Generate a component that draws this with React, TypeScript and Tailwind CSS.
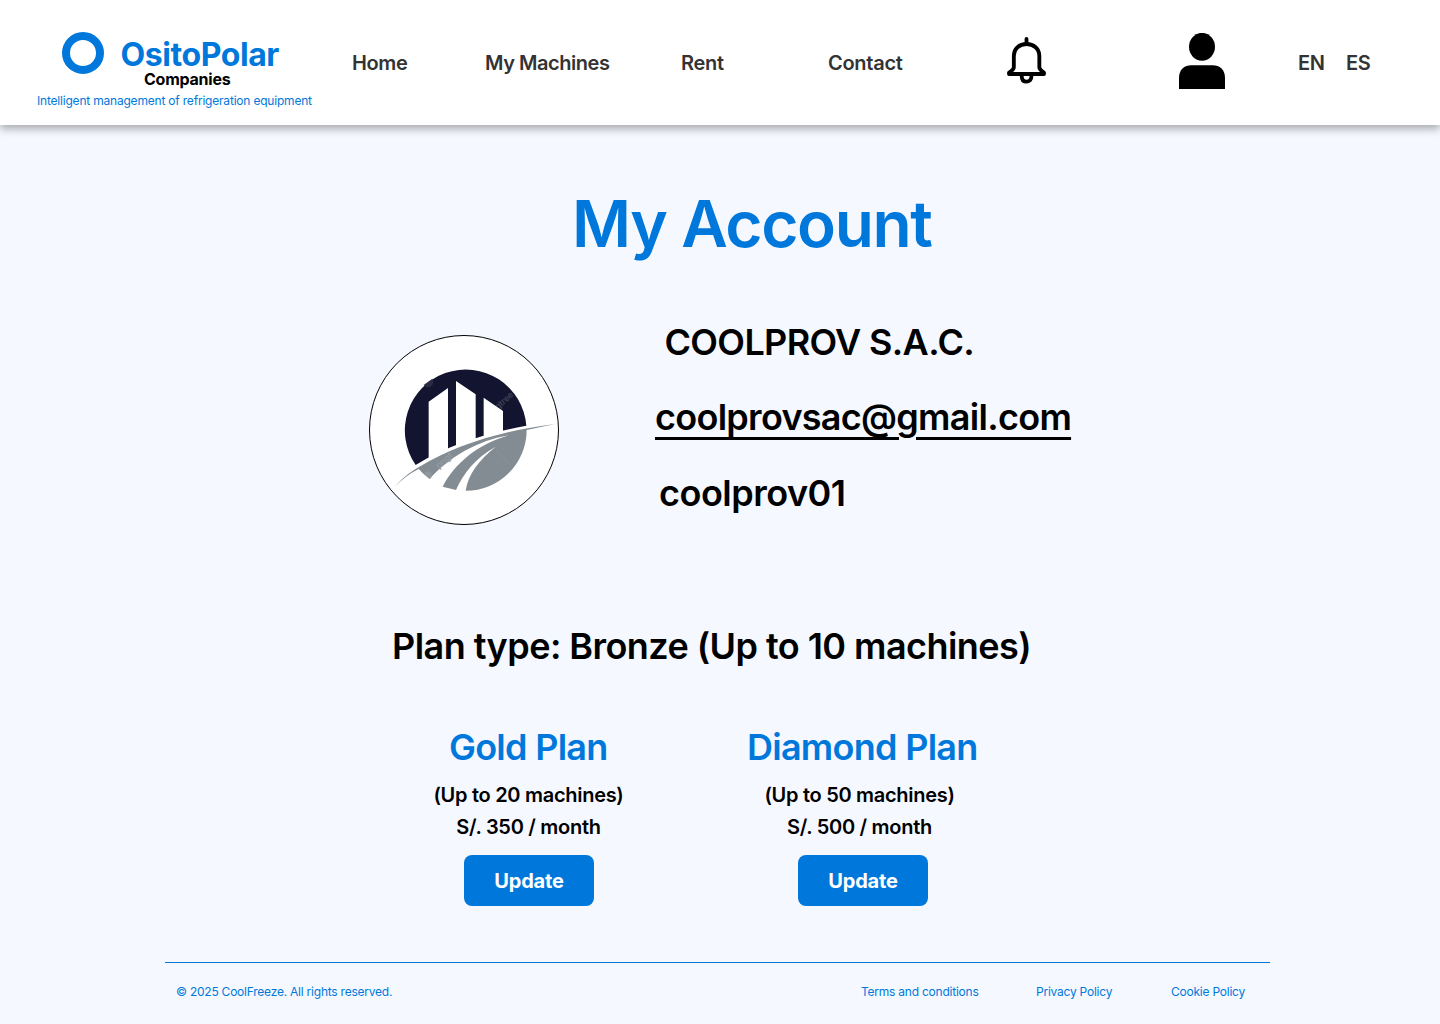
import React from "react";

function BellIcon() {
  return (
    <svg className="h-[47px] w-[39px]" viewBox="51 51 117 141" fill="none" stroke="#000" strokeWidth="11.5" strokeLinejoin="round" strokeLinecap="round">
      <path d="M109.500 57V70" />
      <path d="M57 162V158C64 152 71.500 150 71.500 142V108C71.500 86 88 72 109.500 72C131 72 148 86 148 108V142C148 150 155 152 162 158V162Z" />
      <path d="M95 167C95 179 101 185 109.500 185C118 185 124.500 179 124.500 167" />
    </svg>
  );
}

function UserIcon() {
  return (
    <svg className="h-14 w-[46px]" viewBox="567 39 138 168" fill="#000">
      <ellipse cx="636" cy="80.500" rx="39" ry="42" />
      <path d="M567 207V174C567 149 583 136 604 136H668C689 136 705 149 705 174V207Z" />
    </svg>
  );
}

function CompanyLogo() {
  return (
    <svg className="size-[190px]" viewBox="27 30 570 570">
      <circle cx="312" cy="315" r="283.500" fill="#fff" stroke="#000" strokeWidth="3" />
      <path d="M167 420A182.500 182.500 0 1 1 499 302C390 322 270 356 167 420Z" fill="#13142f" />
      <path d="M191 180L217 161A14 14 0 0 1 191 180Z" fill="#2a2b43" />
      <text x="414" y="256" transform="rotate(-43 414 256)" fill="#3f4053" fontSize="27" fontFamily="Inter, sans-serif">gtree</text>
      <path d="M206 230L264 189V420H206ZM288 168L347 208V400H288ZM371 218L429 258V400H371Z" fill="#fff" />
      <path d="M104 486C125 460 150 441 178 425C290 360 420 318 585 297L500 315A182.500 182.500 0 0 1 317 497.500C325 445 358 405 407 365C345 400 310 445 288 495L248 485C285 415 350 360 446 331C350 348 270 395 209 462Q190 448 176 432Q136 452 104 486Z" fill="#838c93" />
      <text x="237" y="432" transform="rotate(-42 237 432)" fill="#949ba1" fontSize="27" fontFamily="Inter, sans-serif">pngt</text>
      <path d="M192 446A12 12 0 0 1 214 456L209 462Z" fill="#8f979d" />
      <path d="M408 373L450 420" stroke="#929aa0" strokeWidth="1.500" />
    </svg>
  );
}

function Header() {
  return (
    <header className="relative grid h-[125px] grid-cols-[315px_133px_196px_147px_179px_172px_119px_48px_auto] bg-white pl-[37px] text-[20px] leading-[126px] font-semibold text-[#333] shadow-[0_4px_8px_rgba(0,0,0,0.31)]">
      <div className="w-[275px] pt-8 leading-none">
        <div className="flex h-[38px] pl-[25px]">
          <div className="size-[42px] shrink-0 rounded-full border-8 border-[#0078db]" />
          <div className="ml-[16.5px] pt-1 text-[32px] leading-[38px] font-bold tracking-[-0.42px] text-[#0078db]">OsitoPolar</div>
        </div>
        <div className="pl-[107px] text-[16px] leading-[19px] font-bold tracking-[-0.24px] text-black">Companies</div>
        <div className="mt-1 text-[12px] leading-[15px] font-normal tracking-[-0.2px] whitespace-nowrap text-[#0078db]">Intelligent management of refrigeration equipment</div>
      </div>
      <a className="tracking-[-0.4px]">Home</a>
      <a className="tracking-[-0.46px]">My Machines</a>
      <a className="tracking-[-0.3px]">Rent</a>
      <a className="tracking-[-0.28px]">Contact</a>
      <div className="pt-[37px]"><BellIcon /></div>
      <div className="pt-[33px]"><UserIcon /></div>
      <a className="tracking-[-0.4px]">EN</a>
      <a className="tracking-[-0.4px]">ES</a>
    </header>
  );
}

function Plan({ name, limit, price, textInset }: { name: string; limit: string; price: string; textInset: string }) {
  return (
    <section className="flex flex-col items-center text-[20px] leading-8 font-semibold tracking-[-0.29px] whitespace-nowrap">
      <h2 className="pr-[1.5px] text-[36px] leading-[62px] tracking-[-0.72px] text-[#0078db]">{name}</h2>
      <div className={`pt-px text-center ${textInset}`}>
        <p>{limit}</p>
        <p>{price}</p>
      </div>
      <button className="mt-3 h-[51px] w-[130px] rounded-lg bg-[#0078db] font-bold tracking-[-0.15px] text-white">Update</button>
    </section>
  );
}

export default function App() {
  return (
    <div className="flex h-[1024px] w-[1440px] flex-col overflow-hidden bg-[#f5f8ff] text-black" style={{ fontFamily: "Inter, sans-serif" }}>
      <Header />
      <main className="font-semibold">
        <h1 className="mt-[60px] pl-[572px] text-[64px] leading-[78px] tracking-[-1.4px] text-[#0078db]">My Account</h1>
        <div className="mt-[54px] flex h-[220px] pl-[369px] text-[36px] leading-[75px] tracking-[-0.02em] whitespace-nowrap">
          <div className="mt-[18px] w-[286px]"><CompanyLogo /></div>
          <div className="-mt-3">
            <p className="pl-[9.500px] tracking-[-0.66px]">COOLPROV S.A.C.</p>
            <p className="underline decoration-[2.6px] underline-offset-[6.5px]">coolprovsac@gmail.com</p>
            <p className="mt-px pl-1 tracking-[-0.5px]">coolprov01</p>
          </div>
        </div>
        <p className="mt-[87px] pl-[392px] text-[36px] leading-[44px] tracking-[-0.55px]">Plan type: Bronze (Up to 10 machines)</p>
        <div className="mt-12 grid grid-cols-[334px_334px] pl-[362px]">
          <Plan name="Gold Plan" limit="(Up to 20 machines)" price="S/. 350 / month" textInset="pr-px" />
          <Plan name="Diamond Plan" limit="(Up to 50 machines)" price="S/. 500 / month" textInset="pr-[7px]" />
        </div>
      </main>
      <footer className="mt-14 ml-[165px] grid w-[1105px] grid-cols-[685px_175px_135px_auto] border-t border-[#0078db] pt-5 pl-[11px] text-[12px] leading-[18px] tracking-[-0.23px] text-[#0078db]">
        <span>© 2025 CoolFreeze. All rights reserved.</span>
        <a>Terms and conditions</a>
        <a>Privacy Policy</a>
        <a>Cookie Policy</a>
      </footer>
    </div>
  );
}
